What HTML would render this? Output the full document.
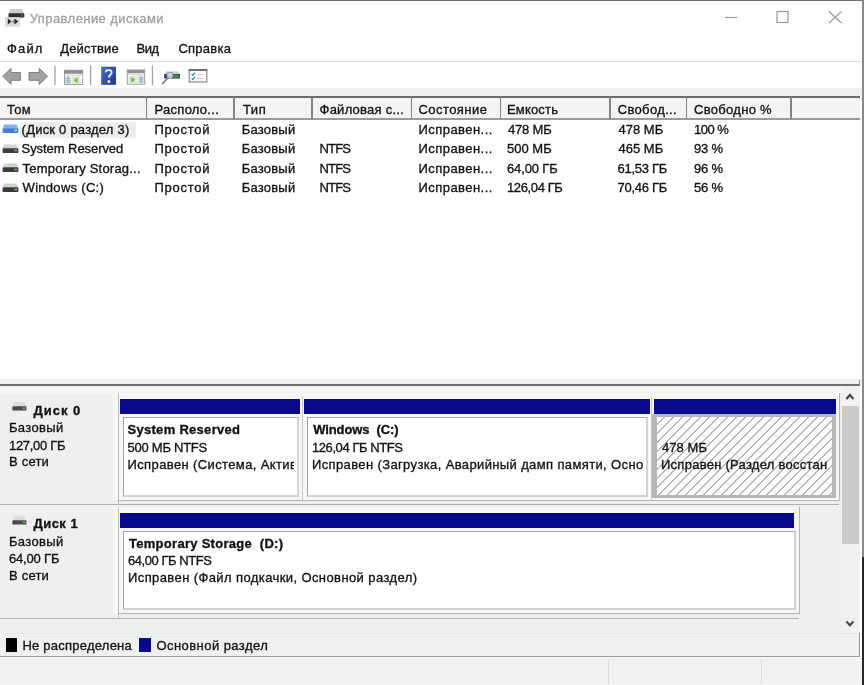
<!DOCTYPE html><html lang="ru"><head><meta charset="utf-8"><title>Управление дисками</title><style>
html,body{margin:0;padding:0}
body{width:864px;height:685px;position:relative;overflow:hidden;background:#fff;font-family:'Liberation Sans',sans-serif;font-size:13px;color:#111}
#w{position:absolute;left:-6px;top:-6px;width:876px;height:697px;overflow:hidden;background:#fff;filter:blur(0.45px)}
#c{position:absolute;left:6px;top:6px;width:864px;height:685px}
.b{position:absolute}
.t{position:absolute;height:20px;line-height:20px;white-space:pre;-webkit-text-stroke:0.32px currentColor}
.bd{font-weight:bold}

</style></head><body><div id="w"><div id="c">
<div class="b" style="left:-6px;top:-6px;width:876px;height:7.3px;background:#707070;"></div>
<div class="b" style="left:-6px;top:61px;width:868px;height:1px;background:#dcdcdc;"></div>
<div class="b" style="left:-6px;top:88px;width:868px;height:8px;background:#f0f0f0;"></div>
<div class="b" style="left:-6px;top:98px;width:866px;height:20px;background:#f4f4f4;"></div>
<div class="b" style="left:-6px;top:96px;width:866px;height:2px;background:#6c6c6c;"></div>
<div class="b" style="left:-6px;top:118px;width:866px;height:1.6px;background:#9a9a9a;"></div>
<div class="b" style="left:145.5px;top:97px;width:1.5px;height:22px;background:#848484;"></div>
<div class="b" style="left:233px;top:97px;width:1.5px;height:22px;background:#848484;"></div>
<div class="b" style="left:311px;top:97px;width:1.5px;height:22px;background:#848484;"></div>
<div class="b" style="left:410.5px;top:97px;width:1.5px;height:22px;background:#848484;"></div>
<div class="b" style="left:499.5px;top:97px;width:1.5px;height:22px;background:#848484;"></div>
<div class="b" style="left:609px;top:97px;width:1.5px;height:22px;background:#848484;"></div>
<div class="b" style="left:685.5px;top:97px;width:1.5px;height:22px;background:#848484;"></div>
<div class="b" style="left:790px;top:97px;width:1.5px;height:22px;background:#848484;"></div>
<div class="b" style="left:20px;top:122px;width:116px;height:16px;background:#ececec;"></div>
<div class="b" style="left:862.3px;top:-6px;width:8px;height:563px;background:#8e8884;"></div>
<div class="b" style="left:862.3px;top:557px;width:8px;height:140px;background:#2a2628;"></div>
<div class="b" style="left:-6px;top:379px;width:868px;height:6px;background:#f0f0f0;"></div>
<div class="b" style="left:-6px;top:384px;width:866px;height:2.3px;background:#707070;"></div>
<div class="b" style="left:858.6px;top:380px;width:1.2px;height:5px;background:#8a8a8a;"></div>
<div class="b" style="left:-6px;top:386px;width:866px;height:248px;background:#efefef;"></div>
<div class="b" style="left:-6px;top:386.5px;width:848px;height:6.5px;background:#f5f5f5;"></div>
<div class="b" style="left:113px;top:393.1px;width:726px;height:107px;background:#f7f7f7;"></div>
<div class="b" style="left:117.5px;top:393.1px;width:1px;height:111px;background:#c2c2c2;"></div>
<div class="b" style="left:118px;top:499.6px;width:721px;height:1px;background:#b4b4b4;"></div>
<div class="b" style="left:-6px;top:504.0px;width:845px;height:1px;background:#b0b0b0;"></div>
<div class="b" style="left:839px;top:393.1px;width:1px;height:107.5px;background:#b4b4b4;"></div>
<div class="b" style="left:120px;top:399.4px;width:180.2px;height:14.5px;background:#07098a;"></div>
<div class="b" style="left:122.6px;top:417.20000000000005px;width:173.4px;height:76.5px;border-style:solid;border-width:1.5px 2px 2px 1.5px;border-color:#a4a4a4 #d2d2d2 #d2d2d2 #a4a4a4;background:#fff"></div>
<div class="b" style="left:304.2px;top:399.4px;width:345.4px;height:14.5px;background:#07098a;"></div>
<div class="b" style="left:301.6px;top:396.6px;width:1px;height:103px;background:#c6c6c6;"></div>
<div class="b" style="left:306.8px;top:417.20000000000005px;width:338.7px;height:76.5px;border-style:solid;border-width:1.5px 2px 2px 1.5px;border-color:#a4a4a4 #d2d2d2 #d2d2d2 #a4a4a4;background:#fff"></div>
<div class="b" style="left:653.8px;top:399.4px;width:182.2px;height:14.5px;background:#07098a;"></div>
<div class="b" style="left:651.2px;top:396.6px;width:1px;height:103px;background:#c6c6c6;"></div>
<div class="b" style="left:652.0px;top:414.2px;width:174.65px;height:77.7px;border-style:solid;border-color:#b8b8b8;border-width:3.4px 4px 3.4px 5.6px;background:#fff repeating-linear-gradient(135deg,#fff 0,#fff 4.86px,#b8b8b8 4.96px,#b8b8b8 6.36px)"></div>
<div class="b" style="left:113px;top:506.8px;width:686px;height:107px;background:#f7f7f7;"></div>
<div class="b" style="left:117.5px;top:506.8px;width:1px;height:111px;background:#c2c2c2;"></div>
<div class="b" style="left:118px;top:613.3px;width:681px;height:1px;background:#b4b4b4;"></div>
<div class="b" style="left:-6px;top:617.7px;width:805px;height:1px;background:#b0b0b0;"></div>
<div class="b" style="left:799px;top:506.8px;width:1px;height:107.5px;background:#b4b4b4;"></div>
<div class="b" style="left:120px;top:513.1px;width:674.3px;height:14.5px;background:#07098a;"></div>
<div class="b" style="left:122.6px;top:530.9px;width:670.9px;height:76.5px;border-style:solid;border-width:1.5px 2px 2px 1.5px;border-color:#a4a4a4 #d2d2d2 #d2d2d2 #a4a4a4;background:#fff"></div>
<div class="b" style="left:842px;top:387px;width:18px;height:246px;background:#f1f1f1;"></div>
<div class="b" style="left:842px;top:406.4px;width:17px;height:138px;background:#cbcbcb;"></div>
<svg class="b" style="left:844px;top:391px" width="12" height="11" viewBox="0 0 12 11"><path d="M2.4 8 L5.9 4 L9.4 8" fill="none" stroke="#454545" stroke-width="2.2"/></svg>
<svg class="b" style="left:844px;top:618px" width="12" height="11" viewBox="0 0 12 11"><path d="M2.4 3.4 L5.9 7.4 L9.4 3.4" fill="none" stroke="#454545" stroke-width="2.2"/></svg>
<div class="b" style="left:-6px;top:634px;width:866px;height:22px;background:#f0f0f0;"></div>
<div class="b" style="left:-6px;top:633px;width:866px;height:1px;background:#e6e6e6;"></div>
<div class="b" style="left:859.3px;top:633px;width:1px;height:23px;background:#9a9a9a;"></div>
<div class="b" style="left:5.8px;top:638.4px;width:11.4px;height:13.2px;background:#000;"></div>
<div class="b" style="left:139px;top:638.4px;width:12px;height:13.2px;background:#07098a;"></div>
<div class="b" style="left:-6px;top:655.8px;width:866.3px;height:1.2px;background:#9c9c9c;"></div>
<div class="b" style="left:-6px;top:657px;width:868.3px;height:34px;background:#f2f2f2;"></div>
<div class="b" style="left:-6px;top:657px;width:868.3px;height:1px;background:#fafafa;"></div>
<div class="b" style="left:608px;top:660px;width:1px;height:31px;background:#dcdcdc;"></div>
<div class="b" style="left:761px;top:660px;width:1px;height:31px;background:#dcdcdc;"></div>
<div class="b" style="left:-6px;top:683.5px;width:868.3px;height:7.5px;background:#f8f6f6;"></div>
<svg class="b" style="left:720px;top:8px" width="130" height="20" viewBox="0 0 130 20"><g fill="none" stroke="#9a9a9a" stroke-width="1.2"><path d="M5 9.5 H17"/><rect x="57" y="3.5" width="11" height="11"/><path d="M109 3.5 L121.5 15 M121.5 3.5 L109 15"/></g></svg>
<svg class="b" style="left:4px;top:7px" width="22" height="21" viewBox="0 0 22 21">
<path d="M6.5 2 H18 L20 6.5 H4.5 Z" fill="#c9c9c9"/>
<rect x="4.5" y="6.3" width="15.8" height="4.3" rx="0.8" fill="#2e2e2e"/>
<rect x="16.5" y="7.2" width="2.6" height="2.4" fill="#555"/>
<rect x="1.6" y="10.3" width="14" height="8.8" fill="#dadada" stroke="#cccccc" stroke-width="0.6"/>
<path d="M3.8 11.6 L7.6 14.6 L3.8 17.6 Z" fill="#2a2a2a"/>
<path d="M10.4 11.6 L14.2 14.6 L10.4 17.6 Z" fill="#2a2a2a"/>
<rect x="8.6" y="13.4" width="1" height="2.6" fill="#666"/>
</svg>
<svg class="b" style="left:0px;top:64px" width="60" height="24" viewBox="0 0 60 24">
<path d="M2.8 12.3 L11 4.4 V8.5 H20.4 V16.3 H11 V20.5 Z" fill="#a2a2a2" stroke="#7e7e7e" stroke-width="1" stroke-linejoin="round"/>
<path d="M47.6 12.3 L39.2 4.4 V8.5 H29 V16.3 H39.2 V20.5 Z" fill="#a2a2a2" stroke="#7e7e7e" stroke-width="1" stroke-linejoin="round"/>
<rect x="54.3" y="1.8" width="1.3" height="19.5" fill="#a2a2a2"/>
</svg>
<svg class="b" style="left:60px;top:64px" width="36" height="24" viewBox="0 0 36 24">
<rect x="4.5" y="6.3" width="18.2" height="14.2" fill="#fbfbfb" stroke="#9aa0aa" stroke-width="1"/>
<rect x="4.5" y="6.3" width="18.2" height="3.4" fill="#8e8e8e"/>
<rect x="5.4" y="10.6" width="16.5" height="1" fill="#c9ced6"/>
<rect x="5.5" y="12.4" width="5.2" height="7.4" fill="#dfe4ee"/>
<path d="M5.5 14.2 H10.7 M5.5 16.3 H10.7 M5.5 18.3 H10.7 M8 12.4 V19.8" stroke="#93a0bd" stroke-width="0.8"/>
<rect x="12" y="12.4" width="8.6" height="7.4" fill="#d8ecc4"/>
<path d="M17.6 13.4 V19 L13.6 16.2 Z" fill="#7fae57"/>
<rect x="30" y="1.8" width="1.3" height="19.5" fill="#a2a2a2"/>
</svg>
<svg class="b" style="left:100px;top:64px" width="18" height="24" viewBox="0 0 18 24">
<defs><linearGradient id="hg" x1="0" y1="0" x2="1" y2="1"><stop offset="0" stop-color="#4a6cc0"/><stop offset="1" stop-color="#1d3688"/></linearGradient></defs>
<rect x="1.2" y="2.7" width="14.8" height="18.1" fill="url(#hg)"/>
<path d="M5.8 8.3 C5.8 5.4 11.6 5.2 11.6 8.4 C11.6 10.6 8.9 10.9 8.9 13.8" fill="none" stroke="#d8e4fa" stroke-width="2"/>
<circle cx="8.9" cy="17.4" r="1.5" fill="#e8eefc"/>
</svg>
<svg class="b" style="left:124px;top:64px" width="32" height="24" viewBox="0 0 32 24">
<rect x="3.3" y="6" width="17.4" height="14.2" fill="#fbfbfb" stroke="#9aa0aa" stroke-width="1"/>
<rect x="3.3" y="6" width="17.4" height="3.2" fill="#8e8e8e"/>
<rect x="4.2" y="10.2" width="15.6" height="1" fill="#c9ced6"/>
<rect x="4.6" y="12" width="8.6" height="7.4" fill="#d8ecc4"/>
<path d="M7.4 13 V18.6 L11.4 15.8 Z" fill="#7fae57"/>
<rect x="14.4" y="12" width="5.2" height="7.4" fill="#dfe4ee"/>
<path d="M14.4 13.8 H19.6 M14.4 15.9 H19.6 M14.4 17.9 H19.6 M17 12 V19.4" stroke="#93a0bd" stroke-width="0.8"/>
<rect x="27.8" y="1.5" width="1.3" height="20" fill="#a2a2a2"/>
</svg>
<svg class="b" style="left:160px;top:64px" width="24" height="24" viewBox="0 0 24 24">
<path d="M6 7.3 H18 L19.8 10.2 H4.2 Z" fill="#cfd3d3"/>
<rect x="4.2" y="10" width="15.8" height="4.6" fill="#3a4a46"/>
<rect x="13.5" y="10.8" width="5.6" height="3" fill="#3d8a4a"/>
<circle cx="10" cy="11.4" r="3.1" fill="#dfe7f3" fill-opacity="0.85" stroke="#8b93a6" stroke-width="1"/>
<path d="M7.8 13.8 L2.6 19.6" stroke="#8089a6" stroke-width="1.8" stroke-linecap="round"/>
</svg>
<svg class="b" style="left:186px;top:64px" width="24" height="24" viewBox="0 0 24 24">
<rect x="3.2" y="5.6" width="17.6" height="12.4" fill="#fcfcfc" stroke="#8a8a8a" stroke-width="1.2"/>
<rect x="2.8" y="5" width="18.4" height="2" fill="#6e6e6e"/>
<path d="M5.6 10 L6.8 11.3 L9 8.8 M5.6 14.2 L6.8 15.5 L9 13" fill="none" stroke="#4f8fd0" stroke-width="1.4"/>
<path d="M11.5 10.4 H17.5 M11.5 14.6 H17.5" stroke="#e2b9b9" stroke-width="1"/>
</svg>
<svg class="b" style="left:2.4px;top:123.8px" width="18" height="11" viewBox="0 0 18 11">
<path d="M2.2 0.6 H14.6 L16.3 4.6 H0.6 Z" fill="#7db4ee"/>
<rect x="0.6" y="4.3" width="15.8" height="4.7" rx="0.8" fill="#3f7fd0"/>
<rect x="12.2" y="5.6" width="3" height="1.8" fill="#9ccaf5"/>
</svg>
<svg class="b" style="left:2.4px;top:143.6px" width="18" height="11" viewBox="0 0 18 11">
<path d="M2.2 0.6 H14.6 L16.3 4.6 H0.6 Z" fill="#d2d2d2"/>
<rect x="0.6" y="4.3" width="15.8" height="4.7" rx="0.8" fill="#3a3a3a"/>
<rect x="12.2" y="5.6" width="3" height="1.8" fill="#6fae5f"/>
</svg>
<svg class="b" style="left:2.4px;top:163px" width="18" height="11" viewBox="0 0 18 11">
<path d="M2.2 0.6 H14.6 L16.3 4.6 H0.6 Z" fill="#d2d2d2"/>
<rect x="0.6" y="4.3" width="15.8" height="4.7" rx="0.8" fill="#3a3a3a"/>
<rect x="12.2" y="5.6" width="3" height="1.8" fill="#6fae5f"/>
</svg>
<svg class="b" style="left:2.4px;top:182.6px" width="18" height="11" viewBox="0 0 18 11">
<path d="M2.2 0.6 H14.6 L16.3 4.6 H0.6 Z" fill="#d2d2d2"/>
<rect x="0.6" y="4.3" width="15.8" height="4.7" rx="0.8" fill="#3a3a3a"/>
<rect x="12.2" y="5.6" width="3" height="1.8" fill="#6fae5f"/>
</svg>
<svg class="b" style="left:12.4px;top:402.1px" width="16" height="9" viewBox="0 0 16 9"><g transform="translate(0,1.5)">
<path d="M2 -1.2 H12.4 L14.3 3 H0.4 Z" fill="#dcdcdc"/>
<rect x="0.4" y="2.8" width="14" height="4.2" rx="0.6" fill="#4a4a4a"/>
<rect x="10.6" y="4" width="2.8" height="1.6" fill="#6fae5f"/></g>
</svg>
<svg class="b" style="left:12.4px;top:516px" width="16" height="9" viewBox="0 0 16 9"><g transform="translate(0,1.5)">
<path d="M2 -1.2 H12.4 L14.3 3 H0.4 Z" fill="#dcdcdc"/>
<rect x="0.4" y="2.8" width="14" height="4.2" rx="0.6" fill="#4a4a4a"/>
<rect x="10.6" y="4" width="2.8" height="1.6" fill="#6fae5f"/></g>
</svg>
<div class="t" style="left:29.7px;top:9px;letter-spacing:0.43px;color:#a0a0a0;">Управление дисками</div>
<div class="t" style="left:7.1px;top:39px;letter-spacing:1.1px;">Файл</div>
<div class="t" style="left:60.2px;top:39px;letter-spacing:0.2px;">Действие</div>
<div class="t" style="left:136.4px;top:39px;letter-spacing:-0.35px;">Вид</div>
<div class="t" style="left:178.4px;top:39px;letter-spacing:0.25px;">Справка</div>
<div class="t" style="left:7px;top:100px;letter-spacing:0.3px;">Том</div>
<div class="t" style="left:154.5px;top:100px;letter-spacing:0.28px;">Располо...</div>
<div class="t" style="left:243px;top:100px;letter-spacing:0.5px;">Тип</div>
<div class="t" style="left:319.5px;top:100px;letter-spacing:0.25px;">Файловая с...</div>
<div class="t" style="left:418.5px;top:100px;letter-spacing:0.44px;">Состояние</div>
<div class="t" style="left:507px;top:100px;letter-spacing:0.17px;">Емкость</div>
<div class="t" style="left:617.7px;top:100px;letter-spacing:0.35px;">Свобод...</div>
<div class="t" style="left:694px;top:100px;letter-spacing:0.3px;">Свободно %</div>
<div class="t" style="left:21.6px;top:120px;letter-spacing:0.22px;">(Диск 0 раздел 3)</div>
<div class="t" style="left:154.5px;top:120px;letter-spacing:0.75px;">Простой</div>
<div class="t" style="left:241.7px;top:120px;letter-spacing:0.22px;">Базовый</div>
<div class="t" style="left:418.5px;top:120px;letter-spacing:0.45px;">Исправен...</div>
<div class="t" style="left:508px;top:120px;letter-spacing:-0.2px;">478 МБ</div>
<div class="t" style="left:618.5px;top:120px;letter-spacing:0.0px;">478 МБ</div>
<div class="t" style="left:694px;top:120px;letter-spacing:-0.5px;">100 %</div>
<div class="t" style="left:21.6px;top:139px;letter-spacing:-0.07px;">System Reserved</div>
<div class="t" style="left:154.5px;top:139px;letter-spacing:0.75px;">Простой</div>
<div class="t" style="left:241.7px;top:139px;letter-spacing:0.22px;">Базовый</div>
<div class="t" style="left:319.5px;top:139px;letter-spacing:-0.83px;">NTFS</div>
<div class="t" style="left:418.5px;top:139px;letter-spacing:0.45px;">Исправен...</div>
<div class="t" style="left:507px;top:139px;letter-spacing:0.0px;">500 МБ</div>
<div class="t" style="left:618.5px;top:139px;letter-spacing:0.0px;">465 МБ</div>
<div class="t" style="left:694px;top:139px;letter-spacing:-0.17px;">93 %</div>
<div class="t" style="left:22.6px;top:159px;letter-spacing:0.21px;">Temporary Storag...</div>
<div class="t" style="left:154.5px;top:159px;letter-spacing:0.75px;">Простой</div>
<div class="t" style="left:241.7px;top:159px;letter-spacing:0.22px;">Базовый</div>
<div class="t" style="left:319.5px;top:159px;letter-spacing:-0.83px;">NTFS</div>
<div class="t" style="left:418.5px;top:159px;letter-spacing:0.45px;">Исправен...</div>
<div class="t" style="left:507px;top:159px;letter-spacing:-0.14px;">64,00 ГБ</div>
<div class="t" style="left:617.5px;top:159px;letter-spacing:-0.26px;">61,53 ГБ</div>
<div class="t" style="left:694px;top:159px;letter-spacing:-0.17px;">96 %</div>
<div class="t" style="left:22.6px;top:178px;letter-spacing:0.29px;">Windows (C:)</div>
<div class="t" style="left:154.5px;top:178px;letter-spacing:0.75px;">Простой</div>
<div class="t" style="left:241.7px;top:178px;letter-spacing:0.22px;">Базовый</div>
<div class="t" style="left:319.5px;top:178px;letter-spacing:-0.83px;">NTFS</div>
<div class="t" style="left:418.5px;top:178px;letter-spacing:0.45px;">Исправен...</div>
<div class="t" style="left:507px;top:178px;letter-spacing:-0.38px;">126,04 ГБ</div>
<div class="t" style="left:617.5px;top:178px;letter-spacing:-0.26px;">70,46 ГБ</div>
<div class="t" style="left:694px;top:178px;letter-spacing:-0.17px;">56 %</div>
<div class="t bd" style="left:33.6px;top:401px;letter-spacing:0.98px;">Диск 0</div>
<div class="t" style="left:9px;top:418px;letter-spacing:0.33px;">Базовый</div>
<div class="t" style="left:9px;top:436px;letter-spacing:-0.31px;">127,00 ГБ</div>
<div class="t" style="left:9px;top:452px;letter-spacing:0.2px;">В сети</div>
<div class="t bd" style="left:33.5px;top:514px;letter-spacing:0.46px;">Диск 1</div>
<div class="t" style="left:9px;top:532px;letter-spacing:0.33px;">Базовый</div>
<div class="t" style="left:9px;top:549px;letter-spacing:-0.17px;">64,00 ГБ</div>
<div class="t" style="left:9px;top:566px;letter-spacing:0.2px;">В сети</div>
<div class="t bd" style="left:127.5px;top:420px;letter-spacing:0.29px;">System Reserved</div>
<div class="t" style="left:127.5px;top:438px;letter-spacing:-0.25px;">500 МБ NTFS</div>
<div class="t" style="left:127.5px;top:455px;letter-spacing:0.38px;width:166.3px;overflow:hidden;">Исправен (Система, Актив</div>
<div class="t bd" style="left:313.2px;top:420px;letter-spacing:-0.1px;">Windows  (C:)</div>
<div class="t" style="left:312px;top:438px;letter-spacing:-0.42px;">126,04 ГБ NTFS</div>
<div class="t" style="left:312px;top:455px;letter-spacing:0.37px;">Исправен (Загрузка, Аварийный дамп памяти, Осно</div>
<div class="t" style="left:662px;top:438px;letter-spacing:0.06px;">478 МБ</div>
<div class="t" style="left:661px;top:455px;letter-spacing:0.26px;">Исправен (Раздел восстан</div>
<div class="t bd" style="left:129px;top:534px;letter-spacing:0.28px;">Temporary Storage  (D:)</div>
<div class="t" style="left:128px;top:551px;letter-spacing:-0.45px;">64,00 ГБ NTFS</div>
<div class="t" style="left:128px;top:568px;letter-spacing:0.4px;">Исправен (Файл подкачки, Основной раздел)</div>
<div class="t" style="left:22.4px;top:636px;letter-spacing:0.24px;">Не распределена</div>
<div class="t" style="left:156.4px;top:636px;letter-spacing:0.45px;">Основной раздел</div>
</div></div></body></html>
